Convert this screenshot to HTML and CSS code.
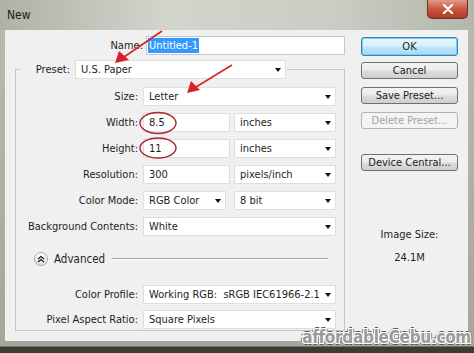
FILE: index.html
```html
<!DOCTYPE html>
<html lang="en">
<head>
    <meta charset="UTF-8">
    <title>New</title>
    <link rel="stylesheet" href="styles.css">
</head>
<body>
    <div class="window">
        <div class="titlebar">
            <span class="title">New</span>
            <div class="close">
                <svg width="12" height="10" viewBox="0 0 12 10"><path d="M2 1 L10 9 M10 1 L2 9" stroke="#fff" stroke-width="2.4" stroke-linecap="round"/></svg>
            </div>
        </div>

        <div class="client">
            <div class="main">
                <div class="name-row">
                    <label class="name-label">Name:</label>
                    <div class="name-field"><span class="sel">Untitled-1</span></div>
                </div>

                <fieldset class="preset">
                    <legend>
                        <div class="legend-inner">
                            <label class="legend-label">Preset:</label>
                            <div class="field select preset-select">U.S. Paper<i class="caret"></i></div>
                        </div>
                    </legend>

                    <div class="row first">
                        <label class="row-label">Size:</label>
                        <div class="field select wide">Letter<i class="caret"></i></div>
                    </div>
                    <div class="row">
                        <label class="row-label">Width:</label>
                        <div class="field num">8.5</div>
                        <div class="field select unit">inches<i class="caret"></i></div>
                    </div>
                    <div class="row">
                        <label class="row-label">Height:</label>
                        <div class="field num">11</div>
                        <div class="field select unit">inches<i class="caret"></i></div>
                    </div>
                    <div class="row">
                        <label class="row-label">Resolution:</label>
                        <div class="field num">300</div>
                        <div class="field select unit">pixels/inch<i class="caret"></i></div>
                    </div>
                    <div class="row">
                        <label class="row-label">Color Mode:</label>
                        <div class="field select mode">RGB Color<i class="caret"></i></div>
                        <div class="field select unit bits">8 bit<i class="caret"></i></div>
                    </div>
                    <div class="row">
                        <label class="row-label">Background Contents:</label>
                        <div class="field select wide">White<i class="caret"></i></div>
                    </div>

                    <div class="advanced">
                        <span class="adv-btn">
                            <svg width="8" height="8" viewBox="0 0 8 8"><path d="M1 4 L4 1.5 L7 4 M1 7 L4 4.5 L7 7" fill="none" stroke="#222" stroke-width="1.3"/></svg>
                        </span>
                        <span class="adv-text">Advanced</span>
                        <span class="adv-line"></span>
                    </div>

                    <div class="row profile">
                        <label class="row-label">Color Profile:</label>
                        <div class="field select wide">Working RGB:&nbsp; sRGB IEC61966-2.1<i class="caret"></i></div>
                    </div>
                    <div class="row tight">
                        <label class="row-label">Pixel Aspect Ratio:</label>
                        <div class="field select wide">Square Pixels<i class="caret"></i></div>
                    </div>
                </fieldset>
            </div>

            <div class="side">
                <button class="btn ok">OK</button>
                <button class="btn cancel">Cancel</button>
                <button class="btn">Save Preset...</button>
                <button class="btn" disabled>Delete Preset...</button>
                <button class="btn device">Device Central...</button>
                <div class="image-size">Image Size:</div>
                <div class="size-value">24.1M</div>
            </div>
        </div>
        <div class="bottom"></div>

        <!-- red marks drawn over the dialog -->
        <svg class="marks" width="474" height="353" viewBox="0 0 474 353">
            <g stroke="#d8222a" stroke-width="1.6" fill="none">
                <path d="M162 31 L124 57"/>
                <path d="M232 65 L196 87"/>
            </g>
            <g fill="#d8222a">
                <path d="M115 63 L119 51 L129 60 Z"/>
                <path d="M187 93 L191 81 L200 90 Z"/>
            </g>
            <g stroke="#a8282f" stroke-width="1.4" fill="none">
                <ellipse cx="158" cy="123" rx="18" ry="10.5"/>
                <ellipse cx="158" cy="148" rx="18" ry="10"/>
            </g>
        </svg>

        <div class="watermark">affordableCebu.com</div>
    </div>
</body>
</html>
```

FILE: styles.css
```css
* {
    box-sizing: border-box;
}

body {
    margin: 0;
    font-family: "DejaVu Sans Condensed", "DejaVu Sans", sans-serif;
    font-size: 11px;
    color: #1e1e1e;
}

.window {
    position: relative;
    width: 474px;
    height: 353px;
    background: linear-gradient(to bottom, #b9bcb1, #a3a699);
    overflow: hidden;
}

.titlebar {
    height: 30px;
    display: flex;
    justify-content: space-between;
    align-items: flex-start;
    padding-left: 7px;
    background: linear-gradient(to right, #aeb1a5, #d3d5cd 35%, #cacdc4 70%, #b3b6aa);
}

.title {
    margin-top: 8px;
    font-size: 12px;
    color: #1a1a1a;
}

.close {
    width: 41px;
    height: 19px;
    margin-right: 6px;
    display: flex;
    align-items: center;
    justify-content: center;
    border: 1px solid #6b3326;
    border-top: none;
    border-radius: 0 0 5px 5px;
    background: linear-gradient(to bottom, #e09a86, #c9563f 50%, #b03b25);
}

.client {
    display: flex;
    height: 311px;
    margin: 0 6px 0 5px;
    background: #f0f0f0;
}

.bottom {
    height: 12px;
    background: linear-gradient(to bottom, #a4a79a 0 5px, #3a3d34 6px);
}

/* left side */
.main {
    width: 347px;
    padding-top: 6px;
}

.name-row {
    display: flex;
    align-items: center;
    height: 19px;
}

.name-label {
    width: 138px;
    text-align: right;
}

.name-field {
    margin-left: 3px;
    width: 199px;
    height: 19px;
    padding: 1px 1px;
    background: #fff;
    border: 1px solid #c3c8ce;
}

.sel {
    display: inline-block;
    padding: 0 1px;
    line-height: 15px;
    background: #3399ff;
    color: #fff;
}

.preset {
    margin: 5px 0 0 10px;
    width: 330px;
    min-width: 0;
    padding: 0 8px 1px 4px;
    border: 1px solid #c6c6c6;
}

legend {
    padding: 0 1px 0 0;
}

.legend-inner {
    display: flex;
    align-items: center;
}

.legend-label {
    width: 50px;
    text-align: right;
    margin-right: 5px;
}

.field {
    height: 19px;
    display: flex;
    align-items: center;
    padding-left: 5px;
    background: #fff;
    border: 1px solid #dedede;
    white-space: nowrap;
}

.caret {
    margin-left: auto;
    margin-right: 4px;
    width: 0;
    height: 0;
    border-left: 3.5px solid transparent;
    border-right: 3.5px solid transparent;
    border-top: 4px solid #111;
}

.preset-select {
    width: 211px;
}

.row {
    display: flex;
    align-items: center;
    height: 19px;
    margin-top: 7px;
}

.row.first {
    margin-top: 8px;
}

.row.profile {
    margin-top: 16px;
}

.row.tight {
    margin-top: 6px;
}

.row-label {
    width: 118px;
    margin-right: 5px;
    text-align: right;
    white-space: nowrap;
}

.wide {
    width: 193px;
}

.num {
    width: 87px;
}

.unit {
    width: 102px;
    margin-left: 4px;
}

.mode {
    width: 83px;
}

.unit.bits {
    margin-left: 8px;
}

.advanced {
    display: flex;
    align-items: center;
    height: 20px;
    margin-top: 13px;
}

.adv-btn {
    margin-left: 14px;
    width: 14px;
    height: 14px;
    display: flex;
    align-items: center;
    justify-content: center;
    border: 1px solid #a9a9a9;
    border-radius: 50%;
    background: linear-gradient(#ffffff, #e2e2e2);
}

.adv-text {
    margin-left: 6px;
    font-size: 11.5px;
}

.adv-line {
    flex: 1;
    height: 2px;
    margin: 0 8px 0 7px;
    border-top: 1px solid #a2a2a2;
    border-bottom: 1px solid #fdfdfd;
}

/* right side */
.side {
    width: 116px;
    padding: 7px 0 0 9px;
    display: flex;
    flex-direction: column;
}

.btn {
    width: 97px;
    height: 17px;
    margin-top: 8px;
    padding: 0;
    font-family: inherit;
    font-size: 11px;
    line-height: 15px;
    color: #1e1e1e;
    text-align: center;
    border: 1px solid #707070;
    border-radius: 3px;
    background: linear-gradient(to bottom, #f3f3f3 0, #ebebeb 48%, #dcdcdc 52%, #cfcfcf 100%);
}

.btn.ok {
    height: 19px;
    margin-top: 0;
    border-color: #3c7fb1;
    box-shadow: inset 0 0 0 1px #6fd2f5;
    background: linear-gradient(to bottom, #eaf6fd 0, #d9f0fc 48%, #bee6fd 52%, #a7d9f5 100%);
}

.btn.cancel {
    margin-top: 6px;
}

.btn:disabled {
    color: #a3a3a3;
    border-color: #adb2b5;
    background: #f4f4f4;
}

.btn.device {
    margin-top: 25px;
}

.image-size {
    width: 97px;
    margin-top: 57px;
    line-height: 14px;
    text-align: center;
}

.size-value {
    width: 97px;
    margin-top: 9px;
    line-height: 14px;
    text-align: center;
}

.marks {
    position: absolute;
    left: 0;
    top: 0;
    pointer-events: none;
}

.watermark {
    position: absolute;
    right: 3px;
    bottom: 6px;
    font-family: "DejaVu Sans Condensed", "DejaVu Sans", sans-serif;
    font-weight: bold;
    font-size: 17px;
    letter-spacing: -0.3px;
    color: #9a9a9a;
    text-shadow:
        1px 0 0 #fff, -1px 0 0 #fff, 0 1px 0 #fff, 0 -1px 0 #fff,
        1px 1px 0 #fff, -1px -1px 0 #fff, 1px -1px 0 #fff, -1px 1px 0 #fff,
        2px 0 0 #555, -2px 0 0 #555, 0 2px 0 #555, 0 -2px 0 #555;
}
```
